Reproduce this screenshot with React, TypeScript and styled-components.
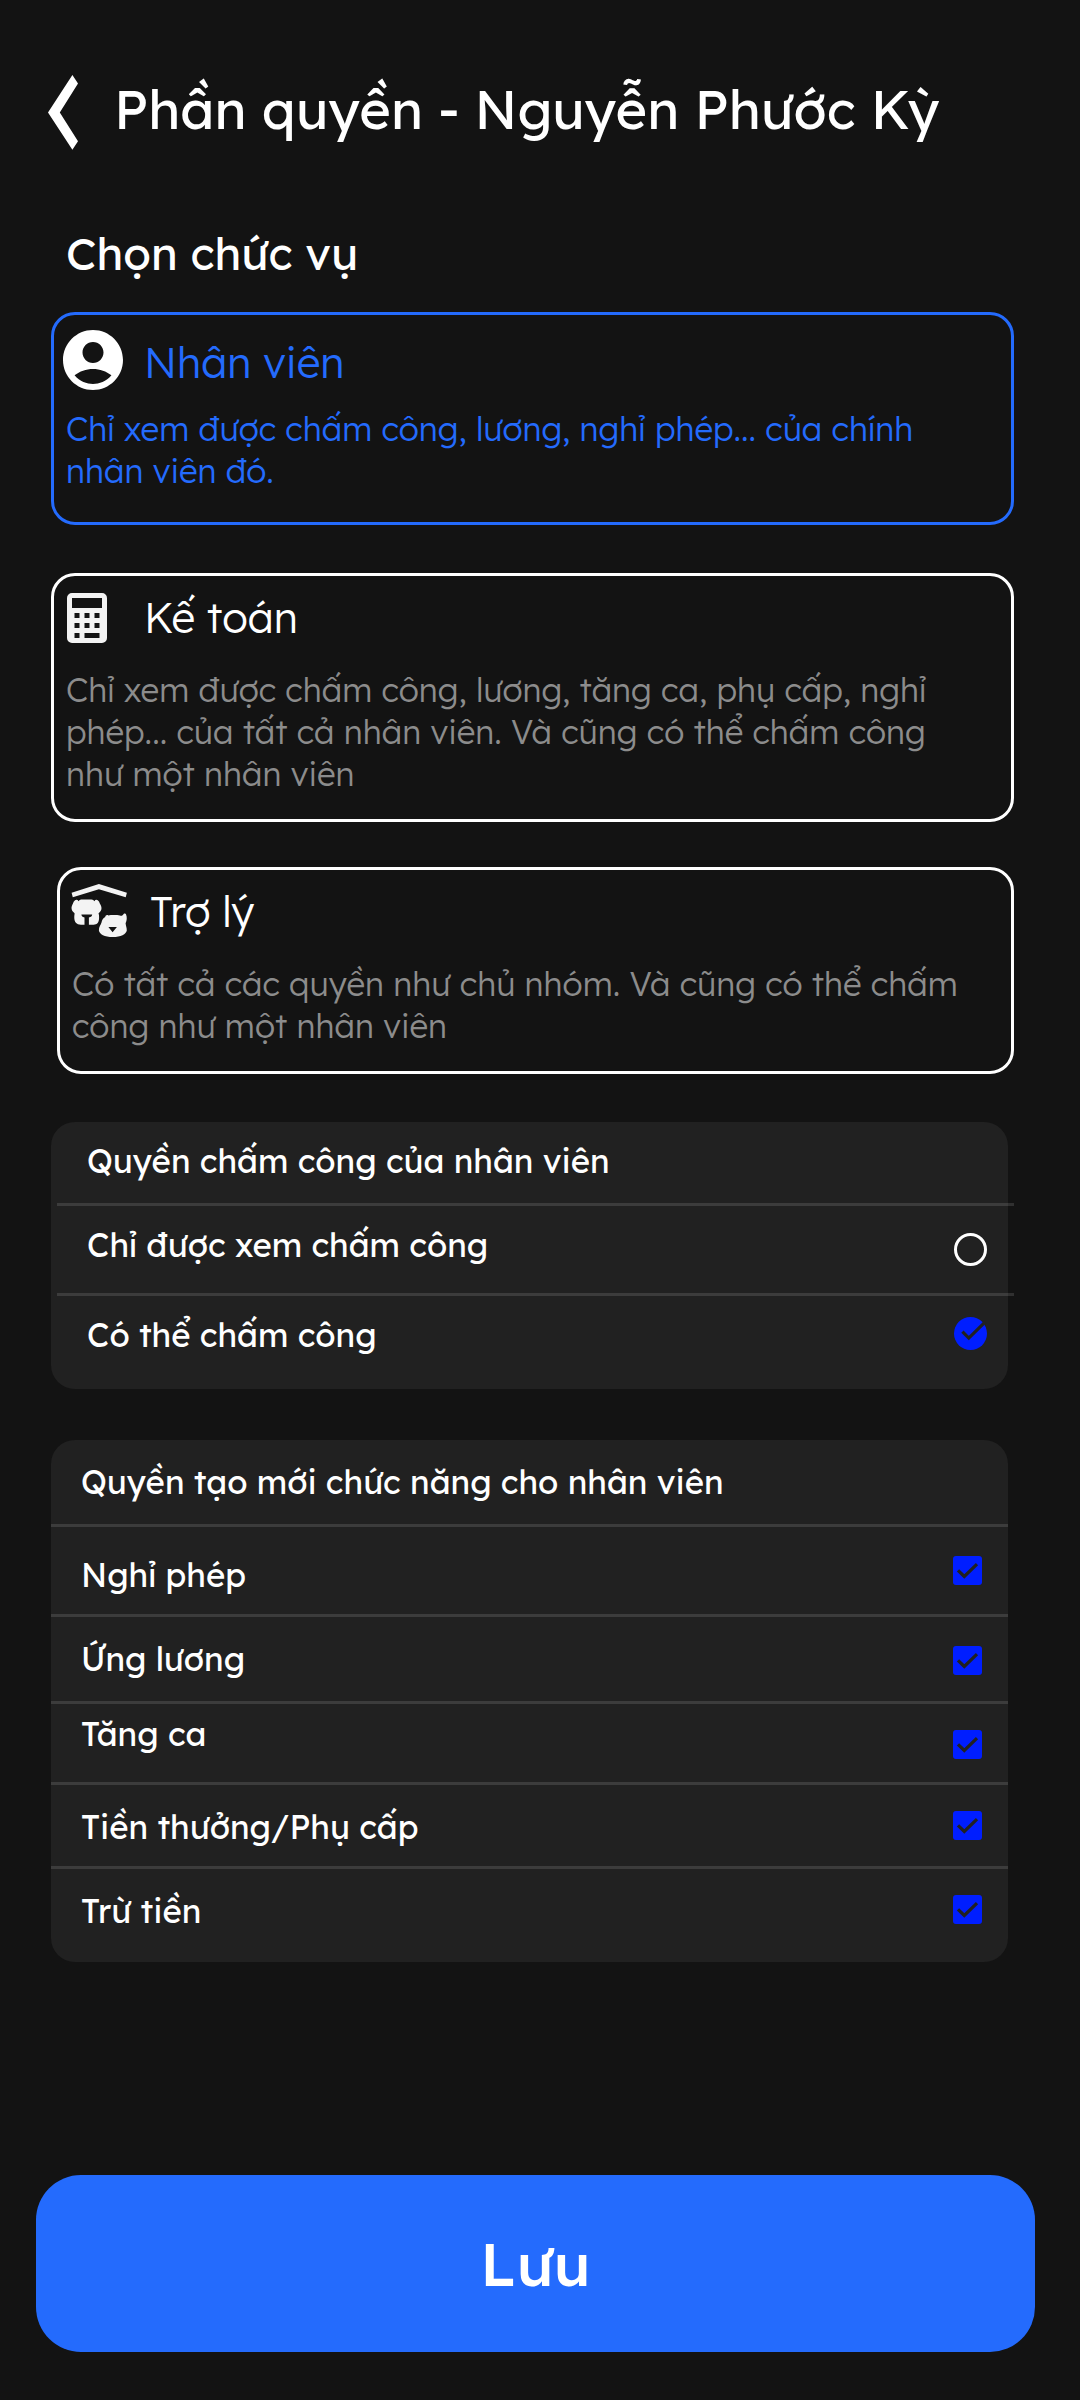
import React, { useState } from "react";
import styled, { createGlobalStyle } from "styled-components";

const color = {
  page: "#131313",
  panel: "#212121",
  blue: "#246bfd",
  check: "#001eff",
  white: "#ffffff",
  icon: "#f3f3f3",
  muted: "#8c8c8c",
};

const GlobalStyle = createGlobalStyle`
  * { box-sizing: border-box; }
  body {
    margin: 0;
    background: ${color.page};
    color: ${color.white};
    font-family: Lexend, Inter, "Noto Sans", sans-serif;
  }
  h1, h2, h3, p { margin: 0; font-weight: 400; }
  button { font: inherit; color: inherit; border: 0; padding: 0; background: none; }
  svg { display: block; flex: none; }
`;

const Screen = styled.main`
  display: flex;
  flex-direction: column;
  width: 1080px;
  height: 2400px;
  padding: 75px 45px 48px 36px;
`;

const Header = styled.header`
  display: flex;
  align-items: flex-start;
  height: 75px;
  padding-left: 12px;
  gap: 35px;
`;

const Title = styled.h1`
  font-size: 54px;
  line-height: 68px;
  white-space: nowrap;
`;

const SectionTitle = styled.h2`
  margin: 75px 0 31px 30px;
  font-size: 45px;
  line-height: 56px;
`;

const RoleList = styled.section`
  display: flex;
  flex-direction: column;
  margin: 0 21px 0 15px;
`;

const RoleCard = styled.article<{ $selected?: boolean; $height: number; $gap: number; $indent?: number }>`
  height: ${(p) => p.$height}px;
  margin: 0 0 ${(p) => p.$gap}px ${(p) => p.$indent ?? 0}px;
  border: 3px solid ${(p) => (p.$selected ? color.blue : color.white)};
  border-radius: 24px;
  color: ${(p) => (p.$selected ? color.blue : color.white)};
`;

const RoleHead = styled.div`
  display: flex;
  align-items: flex-start;
  height: 93px;
`;

const IconSlot = styled.div<{ $left: number; $top: number }>`
  flex: none;
  width: 90px;
  padding: ${(p) => p.$top}px 0 0 ${(p) => p.$left}px;
`;

const RoleName = styled.h3<{ $top: number }>`
  margin-top: ${(p) => p.$top}px;
  font-size: 42px;
  font-weight: 300;
  line-height: 53px;
`;

const RoleText = styled.p<{ $selected?: boolean }>`
  padding-left: 12px;
  color: ${(p) => (p.$selected ? color.blue : color.muted)};
  font-size: 33px;
  font-weight: 300;
  line-height: 42px;
  white-space: pre;
`;

const Panel = styled.section<{ $gap: number }>`
  display: flex;
  flex-direction: column;
  margin: 0 27px ${(p) => p.$gap}px 15px;
  border-radius: 24px;
  background: ${color.panel};
`;

const Row = styled.div<{ $height: number; $left: number }>`
  display: flex;
  align-items: flex-start;
  justify-content: space-between;
  height: ${(p) => p.$height}px;
  padding: 0 20px 0 ${(p) => p.$left}px;
`;

const RowLabel = styled.span<{ $top: number }>`
  margin-top: ${(p) => p.$top}px;
  font-size: 33px;
  line-height: 41px;
  white-space: nowrap;
`;

const Divider = styled.div<{ $shift?: number }>`
  flex: none;
  height: 3px;
  margin: 0 ${(p) => -(p.$shift ?? 0)}px 0 ${(p) => p.$shift ?? 0}px;
  background: rgba(255, 255, 255, 0.125);
`;

const RadioToggle = styled.button<{ $top: number }>`
  width: 33px;
  height: 33px;
  margin: ${(p) => p.$top}px 1px 0 0;
`;

const CheckToggle = styled.button<{ $top: number }>`
  width: 29px;
  height: 29px;
  margin: ${(p) => p.$top}px 6px 0 0;
`;

const RadioRing = styled.span`
  display: block;
  width: 33px;
  height: 33px;
  border: 3px solid ${color.white};
  border-radius: 50%;
`;

const SaveButton = styled.button`
  height: 177px;
  margin-top: auto;
  border-radius: 45px;
  && {
    background: ${color.blue};
    font-size: 60px;
    font-weight: 500;
    line-height: 75px;
  }
`;

const BackIcon = () => (
  <svg width="31" height="75" viewBox="0 0 31 75" fill={color.white}>
    <path d="M24.4 0 30 8.5 11.8 37.4 30 66.3 24.4 74.8 0 37.4Z" />
  </svg>
);

const PersonIcon = () => (
  <svg width="60" height="60" viewBox="2 2 20 20" fill={color.white}>
    <path d="M12 2C6.48 2 2 6.48 2 12s4.48 10 10 10 10-4.48 10-10S17.52 2 12 2zm0 4c1.93 0 3.5 1.57 3.5 3.5S13.93 13 12 13s-3.5-1.57-3.5-3.5S10.07 6 12 6zm0 14c-2.03 0-4.43-.82-6.14-2.88C7.55 15.8 9.68 15 12 15s4.45.8 6.14 2.12C16.43 19.18 14.03 20 12 20z" />
  </svg>
);

const CalculatorIcon = () => (
  <svg width="40" height="50" viewBox="0 0 40 50" fill={color.icon}>
    <path
      fillRule="evenodd"
      d="M5 0H35A5 5 0 0 1 40 5V45A5 5 0 0 1 35 50H5A5 5 0 0 1 0 45V5A5 5 0 0 1 5 0ZM5 5V15H35V5ZM7.5 20V25H12.5V20ZM17.5 20V25H22.5V20ZM27.5 20V25H32.5V20ZM7.5 30V35H12.5V30ZM17.5 30V35H22.5V30ZM27.5 30V35H32.5V30ZM7.5 40V45H12.5V40ZM17.5 40V45H32.5V40Z"
    />
  </svg>
);

const PetsIcon = () => (
  <svg width="57" height="54" viewBox="0 0 57 54" fill={color.icon}>
    <path d="M27.9 0 55.9 8.7 54.7 13.3 27.9 5.3 1.8 13.3.6 8.7Z" />
    <path d="M10.2 15.5H20.5C22 15.5 22.5 16.3 23.4 17.2C24.8 14.7 27.6 15.8 28.8 19.5C31.2 23 31 26.4 28.4 28.4C27.6 28.8 27.3 29.2 27.9 30.5C28.7 37.5 27 40.7 22.5 40.7H17.9V33.5C20 33 21.2 32 21.2 30.5H10.4C10.4 32 11.5 33 13.5 33.5V40.7H10C4.7 40.7 2.7 37.5 3.4 31C3.8 29.6 3.6 28.8 2.8 28.4C.2 26.4-.3 23.5 2 19.5C3.2 15.8 6 14.7 7.6 17.2C8.6 16.3 8.8 15.5 10.2 15.5Z" />
    <path
      fillRule="evenodd"
      d="M34.2 33C34.3 31 36.3 30.4 37.3 31.4C40 30.8 46 30.8 48.8 31.4C50.4 32.4 51.8 31.6 52.6 30C53.4 29.3 54.8 29.4 55 30.3C56.2 33.5 55.9 36.5 54.6 39.2C54.8 42 55.8 43 55.8 46.4C55.2 50 49.8 53 41.8 53C33.6 53 28.4 50 27.9 46.4C27.7 43 29.9 41 30.5 38.6C31 36 32 34 34.2 33ZM37.4 43 41.6 48.2 45.9 43Z"
    />
  </svg>
);

const RoundCheckIcon = () => (
  <svg width="33" height="33" viewBox="0 0 33 33">
    <circle cx="16.5" cy="16.5" r="16.5" fill={color.check} />
    <path d="M8.4 14.6 14.8 21.1 31.5 4.6" fill="none" stroke={color.panel} strokeWidth="3.2" />
  </svg>
);

const SquareCheckIcon = () => (
  <svg width="29" height="29" viewBox="0 0 29 29">
    <rect width="29" height="29" rx="3" fill={color.check} />
    <path d="M5 14.3 11.3 20.5 24 8.2" fill="none" stroke={color.panel} strokeWidth="3.2" />
  </svg>
);

const roles = [
  {
    name: "Nhân viên", nameTop: 21, left: 9, top: 15, height: 213, gap: 48, indent: 0,
    Icon: PersonIcon,
    text: "Chỉ xem được chấm công, lương, nghỉ phép... của chính\nnhân viên đó.",
  },
  {
    name: "Kế toán", nameTop: 15, left: 13, top: 17, height: 249, gap: 45, indent: 0,
    Icon: CalculatorIcon,
    text: "Chỉ xem được chấm công, lương, tăng ca, phụ cấp, nghỉ\nphép... của tất cả nhân viên. Và cũng có thể chấm công\nnhư một nhân viên",
  },
  {
    name: "Trợ lý", nameTop: 15, left: 11, top: 14, height: 207, gap: 48, indent: 6,
    Icon: PetsIcon,
    text: "Có tất cả các quyền như chủ nhóm. Và cũng có thể chấm\ncông như một nhân viên",
  },
];

const modes = [
  { label: "Chỉ được xem chấm công", top: 18, mark: 27, height: 87 },
  { label: "Có thể chấm công", top: 18, mark: 21, height: 93 },
];

const features = [
  { label: "Nghỉ phép", top: 27, mark: 29, height: 87 },
  { label: "Ứng lương", top: 21, mark: 29, height: 84 },
  { label: "Tăng ca", top: 9, mark: 26, height: 78 },
  { label: "Tiền thưởng/Phụ cấp", top: 21, mark: 26, height: 81 },
  { label: "Trừ tiền", top: 21, mark: 26, height: 93 },
];

export default function App() {
  const [role, setRole] = useState(0);
  const [mode, setMode] = useState(1);
  const [enabled, setEnabled] = useState(features.map(() => true));

  return (
    <>
      <GlobalStyle />
      <Screen>
        <Header>
          <BackIcon />
          <Title>Phần quyền - Nguyễn Phước Kỳ</Title>
        </Header>
        <SectionTitle>Chọn chức vụ</SectionTitle>

        <RoleList>
          {roles.map(({ Icon, ...r }, i) => (
            <RoleCard
              key={r.name}
              $selected={role === i}
              $height={r.height}
              $gap={r.gap}
              $indent={r.indent}
              onClick={() => setRole(i)}
            >
              <RoleHead>
                <IconSlot $left={r.left} $top={r.top}>
                  <Icon />
                </IconSlot>
                <RoleName $top={r.nameTop}>{r.name}</RoleName>
              </RoleHead>
              <RoleText $selected={role === i}>{r.text}</RoleText>
            </RoleCard>
          ))}
        </RoleList>

        <Panel $gap={51}>
          <Row $height={81} $left={36}>
            <RowLabel $top={18}>Quyền chấm công của nhân viên</RowLabel>
          </Row>
          {modes.map((m, i) => (
            <React.Fragment key={m.label}>
              <Divider $shift={6} />
              <Row $height={m.height} $left={36}>
                <RowLabel $top={m.top}>{m.label}</RowLabel>
                <RadioToggle $top={m.mark} onClick={() => setMode(i)}>
                  {mode === i ? <RoundCheckIcon /> : <RadioRing />}
                </RadioToggle>
              </Row>
            </React.Fragment>
          ))}
        </Panel>

        <Panel $gap={0}>
          <Row $height={84} $left={30}>
            <RowLabel $top={21}>Quyền tạo mới chức năng cho nhân viên</RowLabel>
          </Row>
          {features.map((f, i) => (
            <React.Fragment key={f.label}>
              <Divider />
              <Row $height={f.height} $left={30}>
                <RowLabel $top={f.top}>{f.label}</RowLabel>
                <CheckToggle
                  $top={f.mark}
                  onClick={() => setEnabled(enabled.map((v, k) => (k === i ? !v : v)))}
                >
                  {enabled[i] && <SquareCheckIcon />}
                </CheckToggle>
              </Row>
            </React.Fragment>
          ))}
        </Panel>

        <SaveButton>Lưu</SaveButton>
      </Screen>
    </>
  );
}
